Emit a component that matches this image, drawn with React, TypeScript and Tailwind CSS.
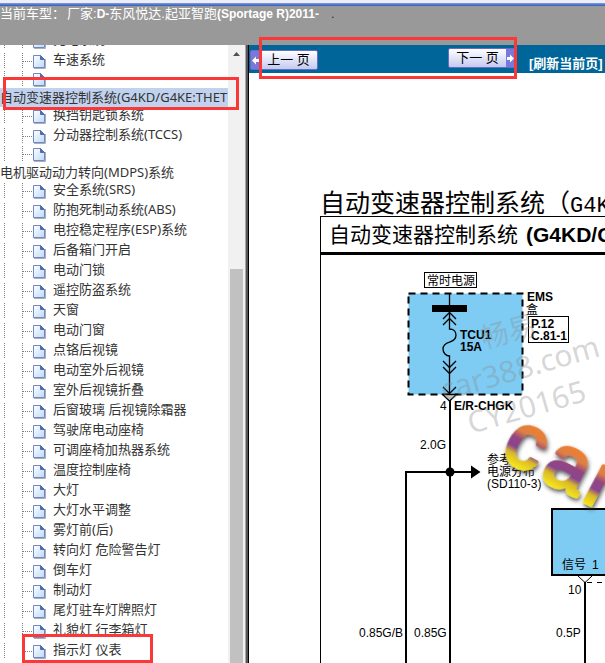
import React from "react";

interface TreeItem {
  title: string;
  wrapped?: boolean;
  active?: boolean;
}

// "wrapped" titles are too long for the icon row and drop to the next line
const treeItems: TreeItem[] = [
  { title: "充电系统" },
  { title: "车速系统" },
  { title: "自动变速器控制系统(G4KD/G4KE:THET", wrapped: true, active: true },
  { title: "换挡钥匙锁系统" },
  { title: "分动器控制系统(TCCS)" },
  { title: "电机驱动动力转向(MDPS)系统", wrapped: true },
  { title: "安全系统(SRS)" },
  { title: "防抱死制动系统(ABS)" },
  { title: "电控稳定程序(ESP)系统" },
  { title: "后备箱门开启" },
  { title: "电动门锁" },
  { title: "遥控防盗系统" },
  { title: "天窗" },
  { title: "电动门窗" },
  { title: "点铬后视镜" },
  { title: "电动室外后视镜" },
  { title: "室外后视镜折叠" },
  { title: "后窗玻璃 后视镜除霜器" },
  { title: "驾驶席电动座椅" },
  { title: "可调座椅加热器系统" },
  { title: "温度控制座椅" },
  { title: "大灯" },
  { title: "大灯水平调整" },
  { title: "雾灯前(后)" },
  { title: "转向灯 危险警告灯" },
  { title: "倒车灯" },
  { title: "制动灯" },
  { title: "尾灯驻车灯牌照灯" },
  { title: "礼貌灯 行李箱灯" },
  { title: "指示灯 仪表" },
];

const TreeLines: React.FC = () => (
  <svg width="53" height="16" viewBox="0 0 53 16" className="shrink-0" aria-hidden="true">
    <g stroke="#808080" strokeDasharray="1 1" shapeRendering="crispEdges">
      <path d="M4.5 0V16" />
      <path d="M22.5 0V16" />
      <path d="M23 8.5H33" />
    </g>
    <path d="M34 15.5H45.5V6" stroke="#a9aec0" fill="none" />
    <path d="M33.5 2.5H40.5L44.5 6.5V14.5H33.5Z" fill="url(#page)" stroke="#7187bd" />
    <path d="M40.5 2.5V6.5H44.5Z" fill="#4f6db0" stroke="#4f6db0" />
  </svg>
);

const TreeRow: React.FC<{ item: TreeItem }> = ({ item }) => {
  if (item.wrapped) {
    return (
      <li className="h-[35px]">
        <div className="h-[18px] pt-px">
          <TreeLines />
        </div>
        <a
          href="#"
          className={
            item.active
              ? "block h-[19px] bg-[#c1d2ee] leading-[19px]"
              : "block h-[19px] leading-[19px]"
          }
        >
          {item.title}
        </a>
      </li>
    );
  }
  return (
    <li className="relative flex h-5 items-start">
      <div className="shrink-0 pt-[3px]">
        <TreeLines />
      </div>
      <a href="#" className="h-5 leading-[19px]">
        {item.title}
      </a>
    </li>
  );
};

const Arrow: React.FC<{ flip?: boolean }> = ({ flip }) => (
  <span className="flex w-[9px] items-center justify-center bg-[#7779dc]">
    <svg width="7" height="9" viewBox="0 0 7 9" className={flip ? "rotate-180" : ""} aria-hidden="true">
      <path d="M0 4.5L4 0.5V3H7V6H4V8.5Z" fill="#fff" />
    </svg>
  </span>
);

const Toolbar: React.FC = () => (
  <div className="flex h-7 shrink-0 items-start bg-[#006699] font-['Liberation_Sans','Noto_Sans_CJK_SC',sans-serif] whitespace-nowrap">
    <button
      type="button"
      className="mt-[5px] ml-px flex h-5 w-[68px] shrink-0 rounded-[2px] border border-[#6a6cc0] bg-linear-to-b from-white to-[#c4caf0] text-[13px] leading-[18px] text-black"
    >
      <Arrow />
      <span className="flex-1">上一 页</span>
    </button>
    <button
      type="button"
      className="mt-[3px] ml-[130px] flex h-5 w-[68px] shrink-0 rounded-[2px] border border-[#6a6cc0] bg-linear-to-b from-white to-[#c4caf0] text-[13px] leading-[18px] text-black"
    >
      <span className="flex-1">下一 页</span>
      <Arrow flip />
    </button>
    <a href="#" className="mt-[9px] ml-[13px] text-[13px] leading-5 font-bold text-white">
      [刷新当前页]
    </a>
  </div>
);

const Diagram: React.FC = () => (
  <svg
    width="600"
    height="600"
    viewBox="321 255 600 600"
    className="block font-['Liberation_Sans','Noto_Sans_CJK_SC',sans-serif] text-[12px]"
    role="img"
    aria-label="自动变速器控制系统"
  >
    <defs>
      <linearGradient id="brand" gradientUnits="userSpaceOnUse" x1="0" y1="-44" x2="0" y2="2">
        <stop offset="0" stopColor="#f0802c" />
        <stop offset="0.25" stopColor="#dd7f45" />
        <stop offset="0.42" stopColor="#93457f" />
        <stop offset="0.62" stopColor="#8a4590" />
        <stop offset="0.76" stopColor="#d9b92a" />
        <stop offset="1" stopColor="#f6e61c" />
      </linearGradient>
      <filter id="brandShadow" x="-20%" y="-20%" width="140%" height="150%">
        <feDropShadow dx="2" dy="2" stdDeviation="2" floodColor="#333" floodOpacity="0.8" />
      </filter>
    </defs>

    {/* power supply */}
    <rect x="424.5" y="272.5" width="52" height="15" fill="#fff" stroke="#000" />
    <text x="427" y="285">常时电源</text>

    {/* fuse box */}
    <rect x="408.5" y="293.5" width="114" height="101" fill="#7ecbf3" stroke="#000" strokeWidth="2" strokeDasharray="7 5" />
    <rect x="432" y="305" width="35" height="7" />
    <g fill="none" stroke="#000" strokeWidth="1.3">
      <path d="M449.5 294V305" />
      <path d="M443 319L449.5 312.5L456 319M443 325L449.5 318.5L456 325" />
      <path d="M449.5 313V329C453 329 456 331 456 335C456 339 453 341 449.5 342C446 343 443 345 443 349C443 353 446 356 449.5 356V393" />
      <path d="M443 361L449.5 367.5L456 361M443 367L449.5 373.5L456 367" />
      <path d="M443 387L449.5 393.5L456 387" />
      <path d="M442.5 394.5H456.5L449.5 401Z" fill="#d4d4d4" />
    </g>
    <g className="font-bold">
      <text x="460" y="339">TCU1</text>
      <text x="460" y="351">15A</text>
      <text x="527" y="301">EMS</text>
      <text x="454" y="410">E/R-CHGK</text>
    </g>
    <text x="526" y="314">盒</text>
    <rect x="528.5" y="316.5" width="40" height="26" fill="#fff" stroke="#000" />
    <g className="font-bold">
      <text x="531" y="328">P.12</text>
      <text x="531" y="340">C.81-1</text>
    </g>
    <text x="440" y="410">4</text>

    {/* wires */}
    <g fill="none" stroke="#000" strokeWidth="2">
      <path d="M450 400V855" />
      <path d="M406 855V472H474" />
    </g>
    <circle cx="450" cy="472" r="4.5" />
    <path d="M471 465.500L480.500 472L471 478.500Z" />
    <text x="420" y="449">2.0G</text>
    <text x="359" y="637">0.85G/B</text>
    <text x="414" y="637">0.85G</text>
    <text x="487" y="464">参考</text>
    <text x="487" y="476">电源分布</text>
    <text x="487" y="488">(SD110-3)</text>

    {/* control module */}
    <rect x="552" y="509" width="360" height="66" fill="#7ecbf3" stroke="#000" strokeWidth="2" />
    <text x="562" y="569">信号</text>
    <text x="592" y="569">1</text>
    <path d="M578 576L585 582.500L592 576" fill="none" stroke="#000" />
    <path d="M587 582.500H900" stroke="#000" strokeDasharray="5 5" />
    <path d="M585 582V855" stroke="#000" strokeWidth="2" />
    <text x="568" y="594">10</text>
    <text x="556" y="637">0.5P</text>

    {/* watermark */}
    <g className="font-['Noto_Sans','Noto_Sans_CJK_SC',sans-serif]" fill="#8c8c8c" fillOpacity="0.36">
      <text transform="translate(484 349) rotate(-16)" className="text-[28px]">畅易</text>
      <text transform="translate(444 401) rotate(-16)" className="text-[30px]">car388.com</text>
      <text transform="translate(471 434) rotate(-16)" className="text-[30px]">CY20165</text>
    </g>

    <g transform="translate(499 456) rotate(28)" filter="url(#brandShadow)">
      <text
        x="0 45 92"
        y="0"
        className="text-[76px]"
        fill="url(#brand)"
        stroke="url(#brand)"
        strokeWidth="4"
        strokeLinejoin="round"
      >
        car
      </text>
    </g>
  </svg>
);

const App: React.FC = () => {
  return (
    <div className="relative flex h-screen flex-col overflow-hidden bg-white">
      <header className="h-[45px] shrink-0 overflow-hidden bg-[#999999] font-['Liberation_Sans','Noto_Sans_CJK_SC',sans-serif] text-[13px] whitespace-nowrap text-white">
        <div className="h-[3px] bg-[#eeeef6]" />
        <div className="h-[3px] bg-linear-to-b from-[#7f9fe0] to-[#3458b8]" />
        <div className="flex leading-4">
          <span className="w-[67px]">当前车型：</span>
          <span>
            厂家:<b className="text-[12px]">D-</b>东风悦达.起亚智跑
            <b className="text-[12px]">(Sportage R)2011-</b>
          </span>
          <span className="ml-3 text-[#333]">.</span>
        </div>
      </header>

      <div className="flex min-h-0 flex-1">
        <nav className="flex w-[249px] shrink-0 border-r border-black">
          <svg width="0" height="0" className="absolute" aria-hidden="true">
            <linearGradient id="page" x1="0" y1="0" x2="1" y2="1">
              <stop offset="0" stopColor="#fff" />
              <stop offset="1" stopColor="#bcd9fb" />
            </linearGradient>
          </svg>
          <div className="min-w-0 flex-1 overflow-hidden">
            <ul className="-mt-[15px] font-['Noto_Sans','Noto_Sans_CJK_SC',sans-serif] text-[13px] whitespace-nowrap text-[#333]">
              {treeItems.map((item) => (
                <TreeRow key={item.title} item={item} />
              ))}
            </ul>
          </div>
          <div className="flex w-[17px] flex-col bg-[#f1f1f1]">
            <svg width="17" height="17" viewBox="0 0 17 17" className="shrink-0" aria-hidden="true">
              <path d="M5 11L8.500 7L12 11Z" fill="#505050" />
            </svg>
            <div className="mx-[2px] mt-[207px] flex-1 bg-[#c1c1c1]" />
          </div>
          <div className="w-[3px] border-l border-[#a8a8a8] bg-[#555]" />
        </nav>

        <main className="flex min-w-0 flex-1 flex-col overflow-hidden">
          <Toolbar />
          <div className="mt-[115px] ml-[71px] min-h-0 flex-1 whitespace-nowrap">
            <h1 className="h-7 font-['Noto_Sans_CJK_SC',sans-serif] text-[25px] leading-[26px]">
              自动变速器控制系统（
              <span className="font-['Liberation_Mono',monospace] text-[22px]">G4KD/G4KE)</span>
            </h1>
            <section className="w-[640px] border border-black">
              <h2 className="flex h-[38px] items-center gap-2 border-b-3 border-black pl-2 font-['Liberation_Sans','Noto_Sans_CJK_SC',sans-serif] text-[21px]">
                自动变速器控制系统
                <b>(G4KD/G4KE)</b>
              </h2>
              <Diagram />
            </section>
          </div>
        </main>
      </div>

      {/* callouts */}
      <div className="pointer-events-none absolute top-[77px] left-[3px] h-[33px] w-[236px] border-3 border-[#fb3838]" />
      <div className="pointer-events-none absolute top-[37px] left-[259px] h-[42px] w-[258px] border-3 border-[#fb3838]" />
      <div className="pointer-events-none absolute top-[634px] left-[22px] h-[29px] w-[131px] border-3 border-[#fb3838]" />
    </div>
  );
};

export default App;
